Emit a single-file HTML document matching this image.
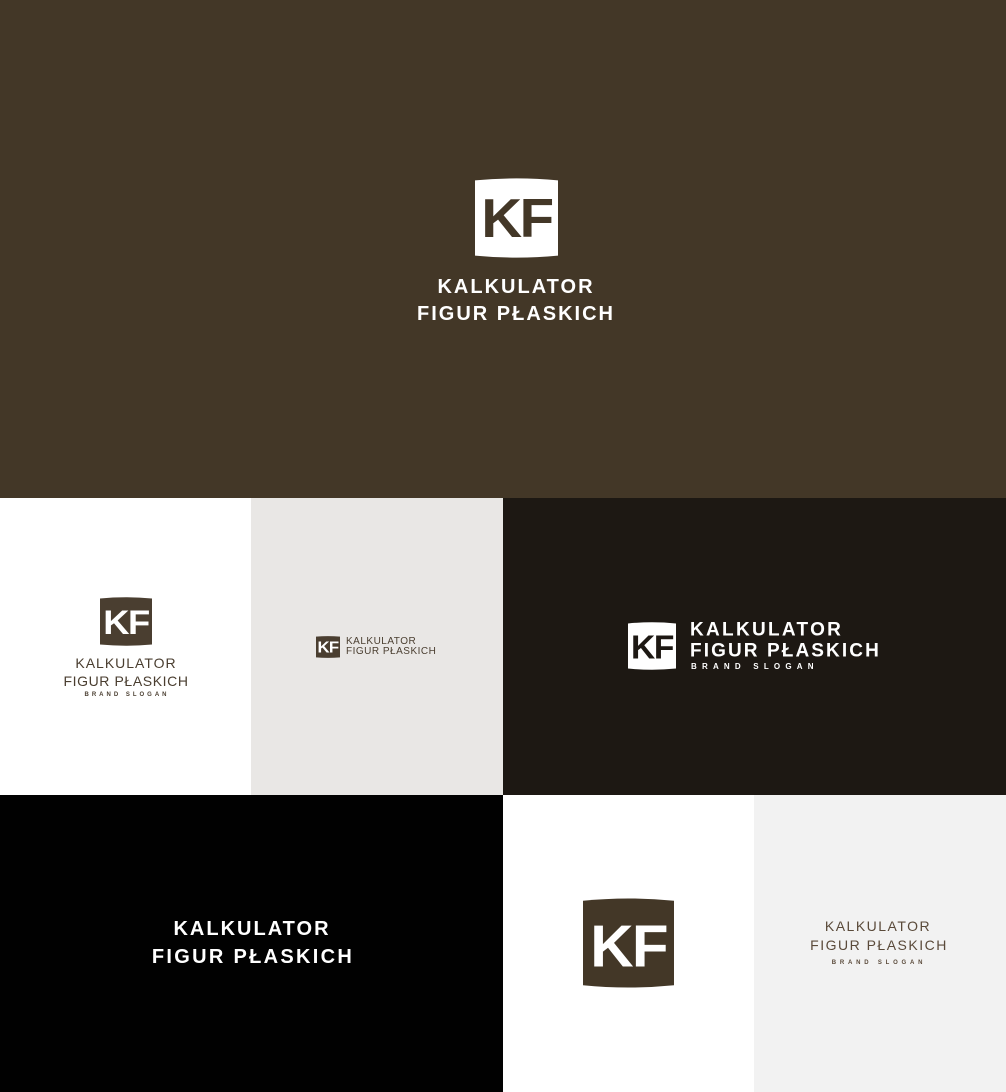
<!DOCTYPE html>
<html><head><meta charset="utf-8"><style>
*{margin:0;padding:0}
body{width:1006px;height:1092px;position:relative;overflow:hidden;font-family:"Liberation Sans",sans-serif}
.p{position:absolute}
.t{position:absolute;white-space:nowrap;line-height:1;transform:translate(-50%,-50%)}
.l{position:absolute;white-space:nowrap;line-height:1;transform:translateY(-50%)}
svg{position:absolute;overflow:visible}
</style></head><body>
<div class="p" style="left:0;top:0;width:1006px;height:498px;background:#433727"></div>
<div class="p" style="left:0;top:498px;width:251px;height:297px;background:#fff"></div>
<div class="p" style="left:251px;top:498px;width:252px;height:297px;background:#e9e7e5"></div>
<div class="p" style="left:503px;top:498px;width:503px;height:297px;background:#1d1813"></div>
<div class="p" style="left:0;top:795px;width:503px;height:297px;background:#010101"></div>
<div class="p" style="left:503px;top:795px;width:251px;height:297px;background:#fff"></div>
<div class="p" style="left:754px;top:795px;width:252px;height:297px;background:#f2f2f2"></div>

<!-- main -->
<svg style="left:475px;top:178px" width="83" height="80" viewBox="0 0 100 100" preserveAspectRatio="none"><path d="M0 3 Q50 -2 100 3 V97 Q50 102 0 97Z" fill="#fff"/><text x="50" y="74" text-anchor="middle" font-family="Liberation Sans" font-size="68" font-weight="bold" letter-spacing="-3" fill="#433727">KF</text></svg>
<div class="t" style="left:516px;top:287px;color:#fff;font-size:20px;font-weight:bold;letter-spacing:2px">KALKULATOR</div>
<div class="t" style="left:516px;top:314px;color:#fff;font-size:20px;font-weight:bold;letter-spacing:2px">FIGUR PŁASKICH</div>

<!-- panel1 -->
<svg style="left:100px;top:597px" width="52" height="49" viewBox="0 0 100 100" preserveAspectRatio="none"><path d="M0 3 Q50 -2 100 3 V97 Q50 102 0 97Z" fill="#4a3e30"/><text x="50" y="76" text-anchor="middle" font-family="Liberation Sans" font-size="70" font-weight="bold" letter-spacing="-3" fill="#fff">KF</text></svg>
<div class="t" style="left:126px;top:663px;color:#4a3e30;font-size:14px;letter-spacing:1px">KALKULATOR</div>
<div class="t" style="left:126px;top:681px;color:#4a3e30;font-size:14px;letter-spacing:0.6px">FIGUR PŁASKICH</div>
<div class="t" style="left:127px;top:695px;color:#4a3e30;font-size:6px;font-weight:bold;letter-spacing:3px">BRAND SLOGAN</div>

<!-- panel2 -->
<svg style="left:316px;top:636px" width="24" height="22" viewBox="0 0 100 100" preserveAspectRatio="none"><path d="M0 3 Q50 -2 100 3 V97 Q50 102 0 97Z" fill="#4a3e30"/><text x="50" y="76" text-anchor="middle" font-family="Liberation Sans" font-size="70" font-weight="bold" letter-spacing="-3" fill="#fff">KF</text></svg>
<div class="l" style="left:346px;top:642px;color:#4a3e30;font-size:10px;letter-spacing:0.5px">KALKULATOR</div>
<div class="l" style="left:346px;top:652px;color:#4a3e30;font-size:10px;letter-spacing:0.5px">FIGUR PŁASKICH</div>

<!-- dark panel -->
<svg style="left:628px;top:622px" width="48" height="48" viewBox="0 0 100 100" preserveAspectRatio="none"><path d="M0 3 Q50 -2 100 3 V97 Q50 102 0 97Z" fill="#fff"/><text x="50" y="76" text-anchor="middle" font-family="Liberation Sans" font-size="70" font-weight="bold" letter-spacing="-3" fill="#1d1813">KF</text></svg>
<div class="l" style="left:690px;top:630px;color:#fff;font-size:19px;font-weight:bold;letter-spacing:2.3px">KALKULATOR</div>
<div class="l" style="left:690px;top:651px;color:#fff;font-size:19px;font-weight:bold;letter-spacing:2.1px">FIGUR PŁASKICH</div>
<div class="l" style="left:691px;top:667px;color:#fff;font-size:8px;font-weight:bold;letter-spacing:5.2px">BRAND SLOGAN</div>

<!-- black panel -->
<div class="t" style="left:252px;top:929px;color:#fff;font-size:20px;font-weight:bold;letter-spacing:2px">KALKULATOR</div>
<div class="t" style="left:253px;top:957px;color:#fff;font-size:20px;font-weight:bold;letter-spacing:2.3px">FIGUR PŁASKICH</div>

<!-- icon panel -->
<svg style="left:583px;top:898px" width="91" height="90" viewBox="0 0 100 100" preserveAspectRatio="none"><path d="M0 3 Q50 -2 100 3 V97 Q50 102 0 97Z" fill="#433727"/><text x="50" y="76" text-anchor="middle" font-family="Liberation Sans" font-size="66" font-weight="bold" letter-spacing="-2" fill="#fff">KF</text></svg>

<!-- last panel -->
<div class="t" style="left:878px;top:926px;color:#5a4a3a;font-size:14px;letter-spacing:1.5px">KALKULATOR</div>
<div class="t" style="left:879px;top:945px;color:#5a4a3a;font-size:14px;letter-spacing:1.5px">FIGUR PŁASKICH</div>
<div class="t" style="left:879px;top:963px;color:#5a4a3a;font-size:6px;font-weight:bold;letter-spacing:3.8px">BRAND SLOGAN</div>
</body></html>
